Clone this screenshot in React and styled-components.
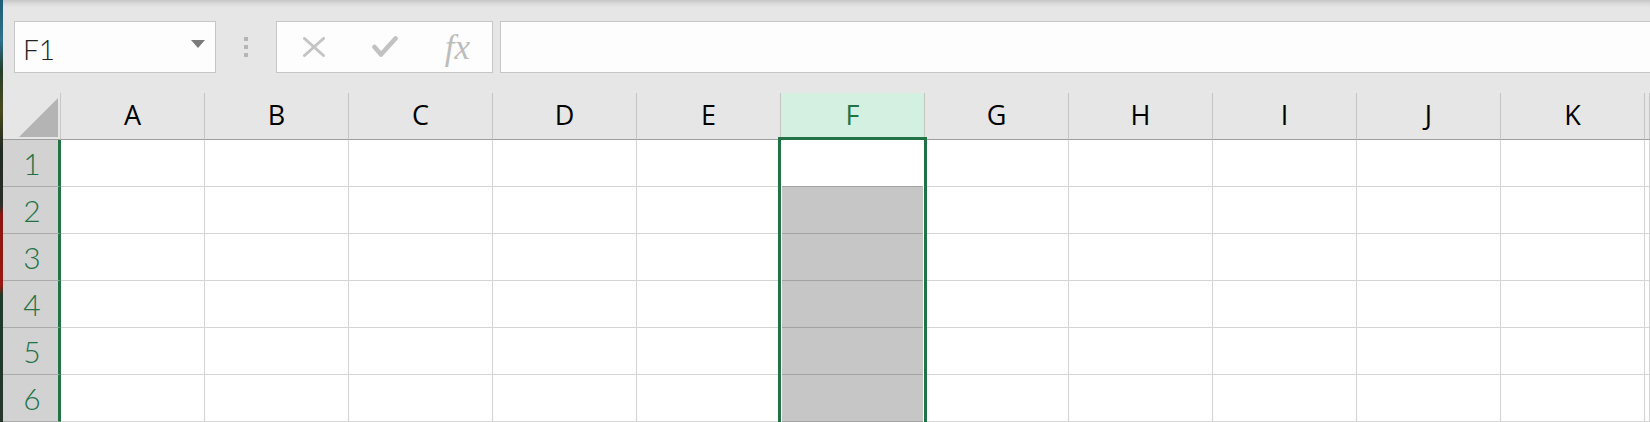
import styled, { createGlobalStyle } from "styled-components";

const COLUMNS = ["A", "B", "C", "D", "E", "F", "G", "H", "I", "J", "K", "L"];
const ROWS = [1, 2, 3, 4, 5, 6];
const SELECTED_COLUMN = "F";
const ACTIVE_ROW = 1;
const GREEN = "#217346";

const GlobalStyle = createGlobalStyle`
    html, body {
        margin: 0;
        padding: 0;
        background: #e6e6e6;
    }
    body {
        font-family: "Open Sans", "Noto Sans CJK JP", sans-serif;
    }
`;

const App = () => {
    const selectedIndex = COLUMNS.indexOf(SELECTED_COLUMN);

    return (
        <>
            <GlobalStyle />
            <Screen>
                <DesktopEdge />
                <Window>
                    <FormulaBar>
                        <NameBox>
                            <NameText>F1</NameText>
                            <DropArrow viewBox="0 0 14 8">
                                <path d="M0 0 H14 L7 8 Z" fill="#7a7a7a" />
                            </DropArrow>
                        </NameBox>
                        <Grip>
                            <span />
                            <span />
                            <span />
                        </Grip>
                        <ButtonGroup>
                            <ToolButton>
                                <svg width="22" height="20" viewBox="0 0 22 20">
                                    <path
                                        d="M1.5 1.5 L20.5 18.5 M20.5 1.5 L1.5 18.5"
                                        stroke="#c4c4c4"
                                        strokeWidth="3"
                                        strokeLinecap="round"
                                    />
                                </svg>
                            </ToolButton>
                            <ToolButton>
                                <svg width="26" height="22" viewBox="0 0 26 22">
                                    <path
                                        d="M2.5 11 L9 18.5 L23.5 2.5"
                                        stroke="#c2c2c2"
                                        strokeWidth="4.6"
                                        strokeLinecap="round"
                                        strokeLinejoin="round"
                                        fill="none"
                                    />
                                </svg>
                            </ToolButton>
                            <ToolButton>
                                <FxLabel>fx</FxLabel>
                            </ToolButton>
                        </ButtonGroup>
                        <FormulaInput />
                    </FormulaBar>

                    <Sheet>
                        <Corner>
                            <svg width="39" height="39" viewBox="0 0 39 39">
                                <path d="M39 0 V39 H0 Z" fill="#b4b4b4" />
                            </svg>
                        </Corner>
                        {COLUMNS.map((col) => (
                            <ColumnHead key={col} $selected={col === SELECTED_COLUMN}>
                                {col !== "L" && col}
                            </ColumnHead>
                        ))}

                        {ROWS.map((row) => (
                            <Row key={row} row={row} />
                        ))}

                        <SelectionFrame style={{ left: 58 + selectedIndex * 144 - 3 }} />
                    </Sheet>
                </Window>
            </Screen>
        </>
    );
};

const Row = ({ row }) => {
    return (
        <>
            <RowHead>{row}</RowHead>
            {COLUMNS.map((col) =>
                col === SELECTED_COLUMN ? (
                    <SelectedCell key={col}>
                        <CellFill $active={row === ACTIVE_ROW} />
                    </SelectedCell>
                ) : (
                    <Cell key={col} />
                )
            )}
        </>
    );
};

export default App;

const Screen = styled.div`
    display: flex;
    width: 1650px;
    height: 422px;
    overflow: hidden;
`;

const DesktopEdge = styled.div`
    width: 3px;
    flex-shrink: 0;
    background: linear-gradient(
        180deg,
        #1d5d78 0,
        #2f6f8f 40px,
        #23402c 70px,
        #4b4a1c 110px,
        #1f2a22 150px,
        #2a2f28 205px,
        #8c1410 215px,
        #9a1812 285px,
        #1e3a2a 295px,
        #25362b 422px
    );
`;

const Window = styled.div`
    flex: 1;
    display: flex;
    flex-direction: column;
    min-width: 0;
`;

const FormulaBar = styled.div`
    height: 94px;
    box-sizing: border-box;
    display: flex;
    align-items: flex-start;
    padding: 21px 0 0 11px;
    background: linear-gradient(180deg, #c6c6c6 0, #dcdcdc 4px, #e6e6e6 8px);
`;

const NameBox = styled.div`
    width: 202px;
    height: 52px;
    box-sizing: border-box;
    display: flex;
    align-items: center;
    justify-content: space-between;
    padding: 0 10px 0 8px;
    background: #fdfdfd;
    border: 1px solid #c6c6c6;
`;

const NameText = styled.span`
    font-family: "Lato", "Open Sans", sans-serif;
    font-weight: 300;
    font-size: 28px;
    color: #222;
    line-height: 1;
    margin-top: 4px;
`;

const DropArrow = styled.svg`
    width: 14px;
    height: 8px;
    margin-top: -6px;
`;

const Grip = styled.div`
    display: flex;
    flex-direction: column;
    gap: 4px;
    margin: 16px 28px 0;

    span {
        width: 4px;
        height: 4px;
        background: #b5b5b5;
    }
`;

const ButtonGroup = styled.div`
    width: 217px;
    height: 52px;
    box-sizing: border-box;
    display: flex;
    padding-left: 1px;
    background: #fdfdfd;
    border: 1px solid #c6c6c6;
`;

const ToolButton = styled.div`
    width: 72px;
    display: flex;
    align-items: center;
    justify-content: center;
`;

const FxLabel = styled.span`
    font-family: "Liberation Serif", serif;
    font-style: italic;
    font-size: 35px;
    color: #bdbdbd;
    line-height: 1;
    margin-left: 2px;
`;

const FormulaInput = styled.div`
    flex: 1;
    height: 52px;
    box-sizing: border-box;
    margin: 0 -2px 0 7px;
    background: #fdfdfd;
    border: 1px solid #c6c6c6;
`;

const Sheet = styled.div`
    position: relative;
    display: grid;
    grid-template-columns: 58px repeat(11, 144px) 1fr;
    grid-auto-rows: 47px;
    background: #fff;
`;

const Corner = styled.div`
    display: flex;
    align-items: flex-end;
    justify-content: flex-end;
    padding: 0 2px 2px 0;
    background: #e6e6e6;
    border-right: 1px solid #c8c8c8;
    border-bottom: 1px solid #9e9e9e;
`;

const ColumnHead = styled.div`
    display: flex;
    align-items: center;
    justify-content: center;
    padding-bottom: 3px;
    box-sizing: border-box;
    font-size: 27px;
    color: ${({ $selected }) => ($selected ? GREEN : "#000")};
    background: ${({ $selected }) => ($selected ? "#d3f0e0" : "#e6e6e6")};
    border-right: 1px solid #c4c4c4;
    border-bottom: 1px solid #9e9e9e;
`;

const RowHead = styled.div`
    display: flex;
    align-items: center;
    justify-content: center;
    padding-left: 3px;
    font-family: "Lato", "Open Sans", sans-serif;
    font-weight: 300;
    font-size: 30px;
    color: ${GREEN};
    background: #d2d2d2;
    border-right: 3px solid ${GREEN};
    border-bottom: 1px solid #ababab;
`;

const Cell = styled.div`
    border-right: 1px solid #d4d4d4;
    border-bottom: 1px solid #d4d4d4;
`;

const SelectedCell = styled.div`
    padding: 0 1px;
    border-right: 1px solid #d4d4d4;
    background: #fff;
`;

const CellFill = styled.div`
    height: 100%;
    box-sizing: border-box;
    background: ${({ $active }) => ($active ? "#fff" : "#c6c6c6")};
    border-bottom: 1px solid #a3a3a3;
`;

const SelectionFrame = styled.div`
    position: absolute;
    top: 44px;
    bottom: -10px;
    width: 149px;
    box-sizing: border-box;
    border: 3px solid ${GREEN};
    border-bottom: none;
    pointer-events: none;
`;
